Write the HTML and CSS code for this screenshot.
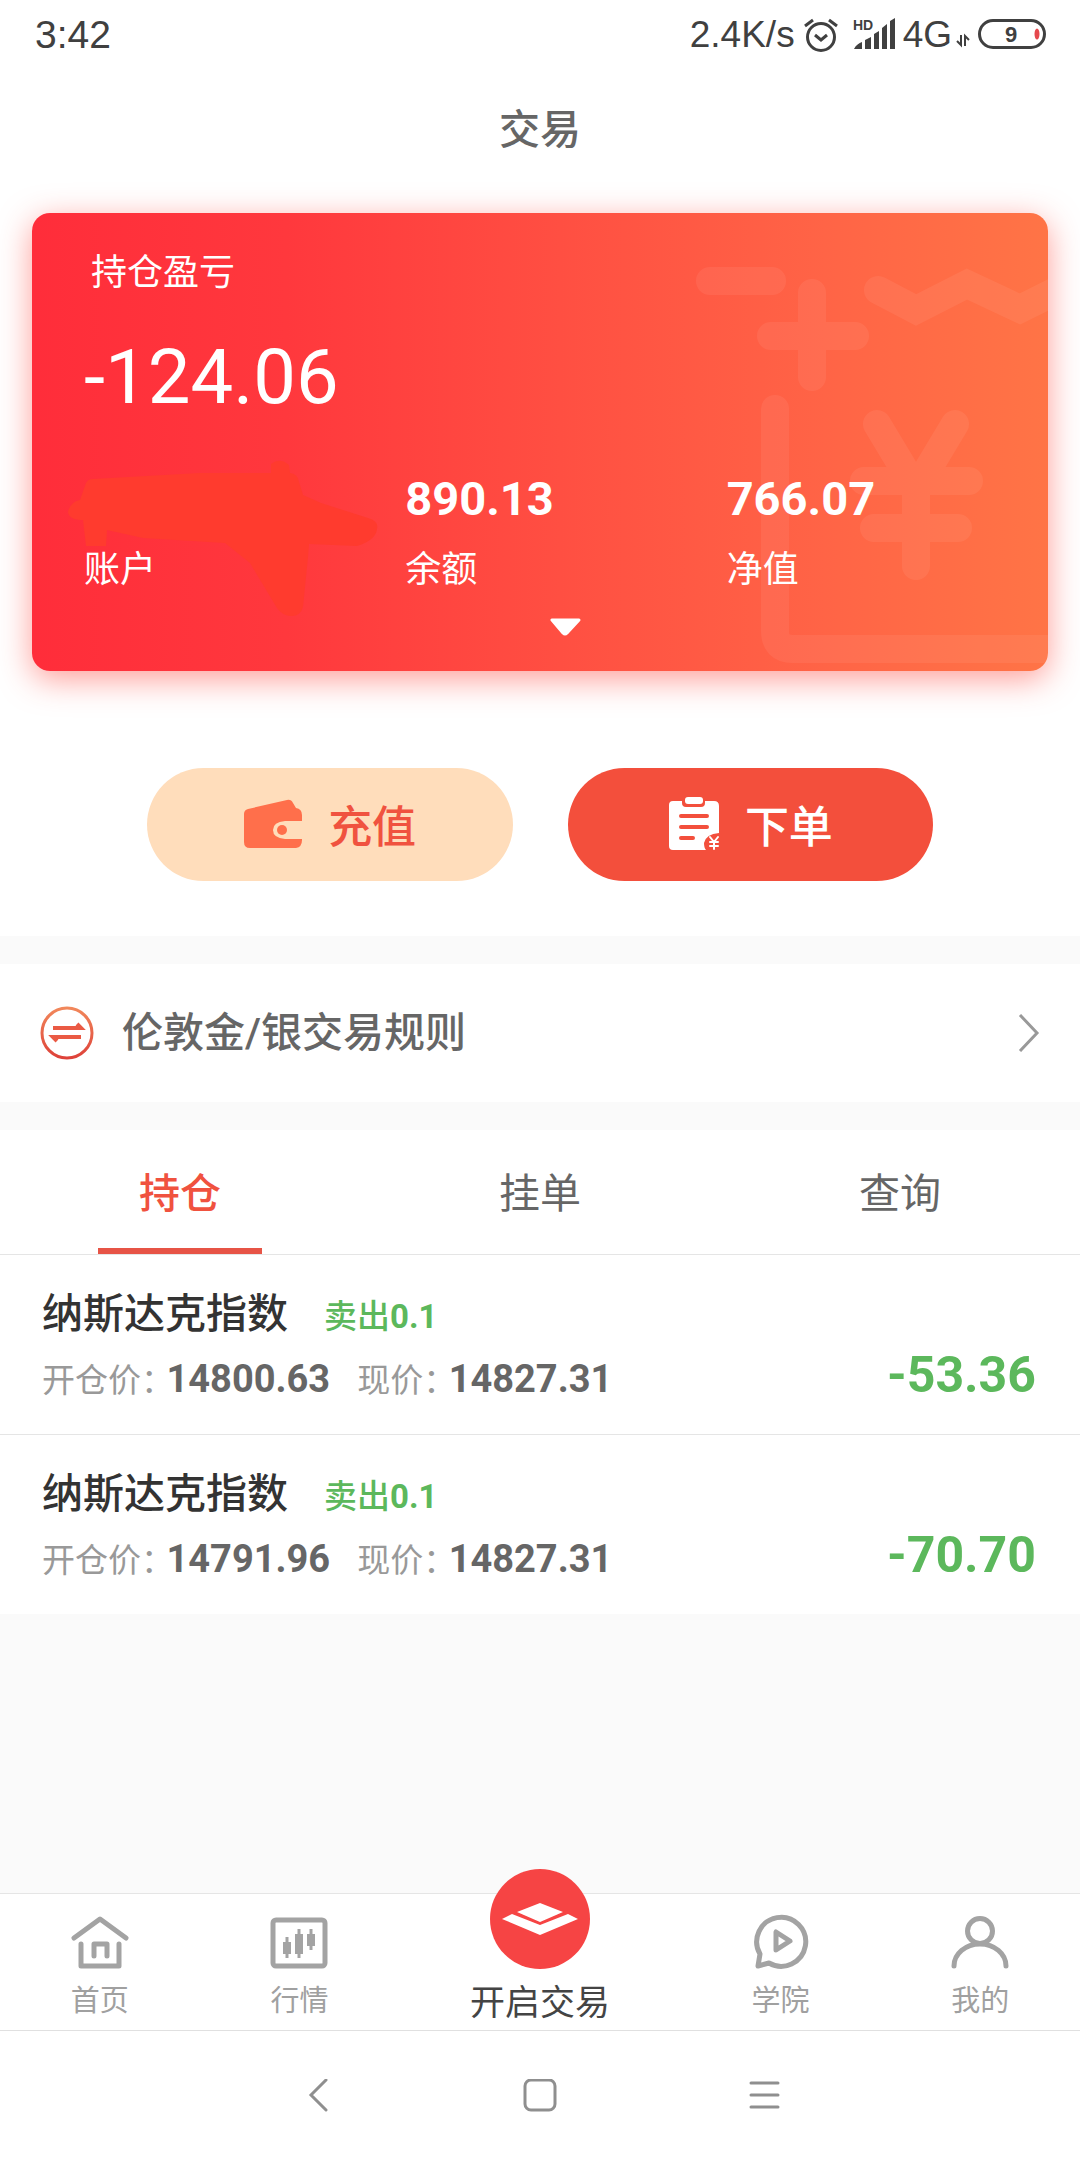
FILE: index.html
```html
<!DOCTYPE html>
<html lang="zh-CN">
<head>
    <meta charset="UTF-8">
    <meta name="viewport" content="width=device-width, initial-scale=1">
    <title>交易</title>
    <link rel="stylesheet" href="styles.css">
</head>
<body>
<div class="status">
    <span class="time">3:42</span>
    <div class="status-right">
        <span class="speed">2.4K/s</span>
        <svg class="alarm" width="36" height="36" viewBox="0 0 36 36">
            <circle cx="18" cy="20" r="13.5"/>
            <path d="M12 18l6 5 6-5M2 9l8-6M34 9l-8-6"/>
        </svg>
        <svg class="signal" width="42" height="36" viewBox="0 0 42 36">
            <text x="0" y="13">HD</text>
            <path d="M1 32c2-4 5-6 8-7v7zM12 23l6-3v12h-6zM21 17l5-3v18h-5zM29 11l5-4v25h-5zM37 4l5-3v31h-5z"/>
        </svg>
        <span>4G</span>
        <svg class="arrows" width="14" height="32" viewBox="0 0 14 32">
            <path d="M5 16v10l-4-4M9 27V17l4 4"/>
        </svg>
        <svg class="battery" width="68" height="32" viewBox="0 0 68 32">
            <rect x="1.5" y="1.5" width="65" height="27" rx="13.5"/>
            <text x="33" y="23">9</text>
            <ellipse cx="59" cy="15" rx="2.5" ry="5.5"/>
        </svg>
    </div>
</div>
<header class="top">
    <h1>交易</h1>
    <section class="card">
        <!-- 右侧底纹 -->
        <svg class="pattern" width="358" height="458" viewBox="0 0 358 458">
            <path d="M20 68H82M122 80V164M81 123H165M188 77L226 97L277 71L330 96L372 75M85 196V418Q85 436 103 436H372M187 211L226 276L265 211M174 268H279M184 315H268M226 268V353"/>
        </svg>
        <!-- 账户涂抹 -->
        <svg class="smear" width="320" height="170" viewBox="0 0 320 170">
            <path d="M4 60Q6 50 16 48L22 31Q24 27 29 27L136 21H207V12Q216 5 225 13L226 21Q234 22 235 30L239 43L257 51L304 66Q315 69 313 77Q312 88 293 94L245 92L244 105L239 155Q236 165 226 164Q218 163 213 156L186 111L161 91L79 86L43 78L42 94H22L19 68Q5 68 4 60Z"/>
        </svg>
        <p class="card-title">持仓盈亏</p>
        <p class="profit">-124.06</p>
        <dl class="funds">
            <div><dd></dd><dt>账户</dt></div>
            <div><dd>890.13</dd><dt>余额</dt></div>
            <div><dd>766.07</dd><dt>净值</dt></div>
        </dl>
        <button class="more" type="button" aria-label="展开">
            <svg width="32" height="18" viewBox="0 0 32 18"><path d="M2 2H29L17 15Q15 17 13 15Z"/></svg>
        </button>
    </section>
    <div class="actions">
        <button class="btn recharge" type="button">
            <svg width="60" height="52" viewBox="0 0 60 52">
                <path d="M1 16Q1 12 5 11L44 2Q48 1 50 5L53 10Q59 11 59 17V42Q59 49 53 50H7Q1 50 1 44Z"/>
                <path class="flap" d="M60 23H42Q30 24 30 32T42 41H60Z"/>
                <circle cx="39" cy="32" r="5"/>
            </svg>
            充值
        </button>
        <button class="btn order" type="button">
            <svg width="52" height="54" viewBox="0 0 52 54">
                <path d="M5 4H14V6Q14 10 18 10H33Q37 10 37 6V4H46Q51 4 51 9V36Q38 37 36 46Q36 51 38 53H5Q1 53 1 49V8Q1 4 5 4Z"/>
                <rect x="17" y="0" width="18" height="7" rx="3"/>
                <path class="lines" d="M13 19H39M13 30H39M13 41H25"/>
                <path class="yen" d="M42 40l4 5 4-5M46 45v7M42 45h8M42 49h8"/>
            </svg>
            下单
        </button>
    </div>
</header>

<a class="rules" href="#">
    <svg width="54" height="54" viewBox="0 0 54 54">
        <defs>
            <linearGradient id="ring" x1="0" y1="0" x2="0" y2="54" gradientUnits="userSpaceOnUse">
                <stop offset="0" stop-color="#f28a5c"/>
                <stop offset="1" stop-color="#dd3f38"/>
            </linearGradient>
        </defs>
        <circle cx="27" cy="27" r="25" stroke="url(#ring)"/>
        <path d="M13 22H41L37 18M41 31H13L17 35" stroke="#ea5a44" stroke-width="4"/>
    </svg>
    <span>伦敦金/银交易规则</span>
    <svg class="arrow" width="22" height="38" viewBox="0 0 22 38"><path d="M2 1L19 19L2 37"/></svg>
</a>

<main class="list">
    <div class="tabs">
        <button class="tab active" type="button"><span>持仓</span></button>
        <button class="tab" type="button"><span>挂单</span></button>
        <button class="tab" type="button"><span>查询</span></button>
    </div>
    <ul>
        <li>
            <p class="name">纳斯达克指数 <span class="side">卖出<b>0.1</b></span></p>
            <p class="price">
                <span>开仓价：</span><b>14800.63</b>
                <span>现价：</span><b>14827.31</b>
                <strong>-53.36</strong>
            </p>
        </li>
        <li>
            <p class="name">纳斯达克指数 <span class="side">卖出<b>0.1</b></span></p>
            <p class="price">
                <span>开仓价：</span><b>14791.96</b>
                <span>现价：</span><b>14827.31</b>
                <strong>-70.70</strong>
            </p>
        </li>
    </ul>
</main>

<nav class="tabbar">
    <a href="#">
        <svg width="58" height="58" viewBox="0 0 58 58">
            <path d="M3 27L29 8L55 27M10 33V55H48V33M23 45V33H36V45"/>
        </svg>
        首页
    </a>
    <a href="#">
        <svg width="58" height="58" viewBox="0 0 58 58">
            <rect x="3" y="9" width="52" height="46" rx="3"/>
            <path class="candle" d="M13 31h8v12h-8zM25 23h8v20h-8zM37 23h8v12h-8zM15.5 26h3v21h-3zM27.5 18h3v29h-3zM39.5 18h3v21h-3z"/>
        </svg>
        行情
    </a>
    <a class="start" href="#">
        <svg width="100" height="100" viewBox="0 0 100 100">
            <circle cx="50" cy="50" r="50"/>
            <path d="M50 34L73 43L50 53L27 43ZM12 50L22 45L50 56L78 45L88 50L50 66Z"/>
        </svg>
        开启交易
    </a>
    <a href="#">
        <svg width="58" height="58" viewBox="0 0 58 58">
            <path d="M6 55L8 43A24.5 24.5 0 1 1 17 52Z"/>
            <path d="M24 21V39L38 30Z"/>
        </svg>
        学院
    </a>
    <a href="#">
        <svg width="58" height="58" viewBox="0 0 58 58">
            <circle cx="29" cy="20" r="12.5"/>
            <path d="M3 55A26 22 0 0 1 55 55"/>
        </svg>
        我的
    </a>
</nav>
<div class="sysbar">
    <button type="button" aria-label="返回"><svg width="34" height="34" viewBox="0 0 34 34"><path d="M26 1L11 16L26 31"/></svg></button>
    <button type="button" aria-label="主页"><svg width="34" height="34" viewBox="0 0 34 34"><rect x="2" y="1" width="30" height="30" rx="6"/></svg></button>
    <button type="button" aria-label="菜单"><svg width="34" height="34" viewBox="0 0 34 34"><path d="M5 4H32M5 16H32M5 28H32"/></svg></button>
</div>
</body>
</html>
```

FILE: styles.css
```css
* {
    box-sizing: border-box;
}
html, body, ul, p, h1, dl, dd {
    margin: 0;
    padding: 0;
}
body {
    min-height: 100vh;
    display: flex;
    flex-direction: column;
    background: #fafafa;
    color: #666;
    font-family: Roboto, "Noto Sans CJK SC", sans-serif;
}
button {
    padding: 0;
    border: none;
    background: none;
    color: inherit;
    font-family: inherit;
    cursor: pointer;
}
a {
    color: inherit;
    text-decoration: none;
}
li {
    list-style: none;
}
svg {
    display: block;
    flex: none;
    fill: none;
}

/* 状态栏 */
.status {
    display: flex;
    justify-content: space-between;
    align-items: center;
    height: 70px;
    padding: 0 34px 0 35px;
    background: #fff;
    color: #404040;
    font-family: "Liberation Sans", sans-serif;
    font-size: 37px;
}
.time {
    font-size: 39px;
}
.status-right {
    display: flex;
    align-items: center;
    gap: 8px;
}
.alarm {
    stroke: #404040;
    stroke-width: 3;
    margin-right: 6px;
}
.signal {
    fill: #404040;
    font-size: 14px;
    font-weight: bold;
}
.arrows {
    stroke: #404040;
    stroke-width: 2;
    margin-left: -4px;
}
.battery rect {
    stroke: #404040;
    stroke-width: 3;
}
.battery text {
    fill: #404040;
    font-size: 22px;
    font-weight: bold;
    text-anchor: middle;
}
.battery ellipse {
    fill: #e5484d;
}

/* 头部 */
.top {
    background: #fff;
    padding: 0 32px 55px;
}
h1 {
    height: 143px;
    line-height: 120px;
    font-size: 41px;
    font-weight: 500;
    text-align: center;
}
.card {
    position: relative;
    padding: 36px 0 27px 52px;
    border-radius: 18px;
    background: linear-gradient(90deg, #ff2d3a, #ff383d 25%, #ff4f42 52%, #ff6446 78%, #ff7446);
    box-shadow: 0 8px 32px rgba(255, 60, 50, .5);
    color: #fff;
}
.pattern {
    position: absolute;
    top: 0;
    right: 0;
    stroke: #fff;
    stroke-width: 28;
    stroke-linecap: round;
    opacity: .06;
}
.smear {
    position: absolute;
    top: 239px;
    left: 32px;
    fill: #ff3b2e;
}
.card p, .card dl, .more {
    position: relative;
}
.card-title {
    padding-left: 7px;
    line-height: 48px;
    font-size: 36px;
}
.profit {
    margin-top: 32px;
    line-height: 96px;
    font-size: 76px;
}
.funds {
    display: grid;
    grid-template-columns: repeat(3, 1fr);
    margin-top: 46px;
}
.funds div {
    display: flex;
    flex-direction: column;
    gap: 19px;
}
.funds dd {
    height: 56px;
    line-height: 56px;
    font-size: 47px;
    font-weight: bold;
}
.funds dt {
    line-height: 48px;
    font-size: 36px;
}
.more {
    display: block;
    width: 100%;
    padding: 24px 0 8px;
}
.more svg {
    margin: 0 auto;
    fill: #fff;
    stroke: #fff;
    stroke-width: 3;
    stroke-linejoin: round;
}
.actions {
    display: flex;
    justify-content: center;
    gap: 55px;
    margin-top: 97px;
}
.btn {
    display: flex;
    justify-content: center;
    align-items: center;
    gap: 25px;
    width: 36%;
    height: 113px;
    padding-bottom: 2px;
    border-radius: 57px;
    font-size: 44px;
    font-weight: 500;
}
.recharge {
    background: #ffddbb;
    color: #f0523f;
}
.recharge svg {
    fill: #ff6f4b;
}
.recharge .flap {
    fill: #ffddbb;
}
.order {
    background: #f34f3c;
    color: #fff;
}
.order svg {
    fill: #fff;
    stroke-linecap: round;
}
.order .lines {
    stroke: #f34f3c;
    stroke-width: 4;
}
.order .yen {
    fill: none;
    stroke: #fff;
    stroke-width: 2;
}

/* 规则入口 */
.rules {
    display: flex;
    align-items: center;
    gap: 28px;
    height: 138px;
    margin: 28px 0;
    padding: 0 40px;
    background: #fff;
    font-size: 41px;
    line-height: 56px;
    font-weight: 500;
}
.rules svg {
    stroke-width: 3;
}
.rules .arrow {
    margin-left: auto;
    stroke: #999;
}

/* 持仓列表 */
.list {
    background: #fff;
}
.tabs {
    display: flex;
    border-bottom: 1px solid #e5e5e5;
}
.tab {
    flex: 1;
    display: flex;
    justify-content: center;
    font-size: 41px;
}
.tab span {
    width: 164px;
    height: 124px;
    line-height: 129px;
    border-bottom: 6px solid transparent;
}
.active {
    color: #f0523f;
    font-weight: 500;
}
.active span {
    border-color: #e75446;
}
.list li {
    padding: 31px 44px 25px 42px;
}
.list li + li {
    border-top: 1px solid #e5e5e5;
}
.name {
    display: flex;
    align-items: baseline;
    gap: 36px;
    line-height: 56px;
    color: #333;
    font-size: 41px;
    font-weight: 500;
}
.side {
    color: #5cb85c;
    font-size: 33px;
}
.price {
    display: flex;
    align-items: baseline;
    margin-top: 2px;
    line-height: 56px;
}
.price span {
    color: #999;
    font-size: 33px;
    font-feature-settings: "halt";
}
.price b {
    margin: 0 27px 0 9px;
    font-size: 38px;
}
.price strong {
    margin-left: auto;
    color: #5cb85c;
    font-size: 50px;
}

/* 底部导航 */
.tabbar {
    display: flex;
    justify-content: space-around;
    align-items: flex-end;
    height: 137px;
    margin-top: auto;
    padding-bottom: 8px;
    border-top: 1px solid #e5e5e5;
    background: #fff;
}
.tabbar a {
    display: flex;
    flex-direction: column;
    align-items: center;
    gap: 11px;
    line-height: 42px;
    color: #a0a0a0;
    font-size: 29px;
}
.tabbar svg {
    stroke: #a3a3a3;
    stroke-width: 5;
    stroke-linecap: round;
    stroke-linejoin: round;
}
.tabbar .candle {
    fill: #a3a3a3;
    stroke: none;
}
.tabbar .start {
    gap: 17px;
    line-height: 36px;
    color: #444;
    font-size: 35px;
}
.start svg {
    fill: #fff;
    stroke: none;
}
.start circle {
    fill: #f64444;
}
.sysbar {
    display: flex;
    justify-content: center;
    height: 130px;
    padding: 0 19%;
    border-top: 1px solid #e0e0e0;
    background: #fff;
}
.sysbar button {
    flex: 1;
    display: flex;
    justify-content: center;
    align-items: center;
}
.sysbar svg {
    stroke: #8f8f8f;
    stroke-width: 3;
    stroke-linecap: round;
}
```
